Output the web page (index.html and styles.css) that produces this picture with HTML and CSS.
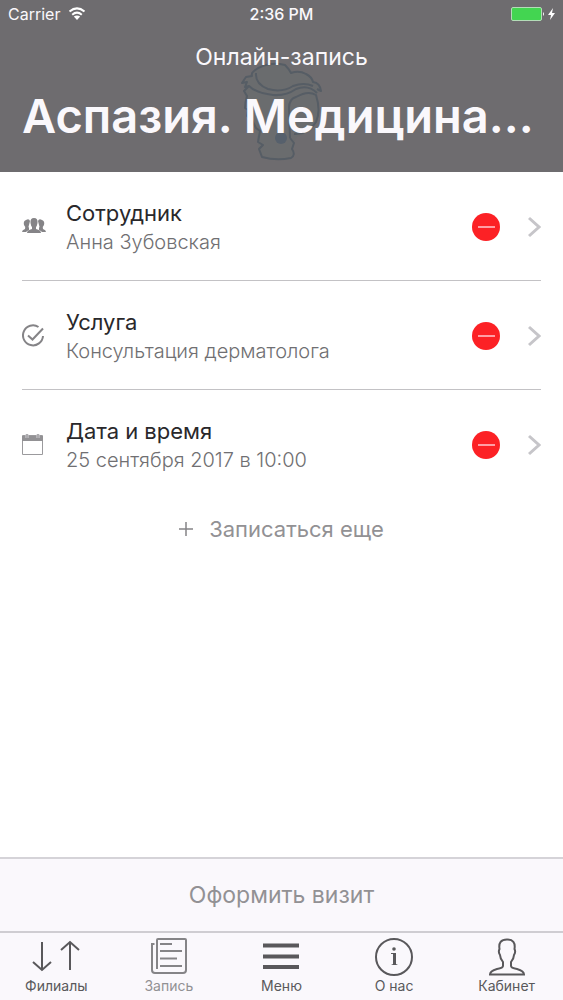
FILE: index.html
```html
<!DOCTYPE html>
<html lang="ru">
<head>
<meta charset="utf-8">
<meta name="viewport" content="width=device-width, initial-scale=1">
<title>Онлайн-запись</title>
<link rel="stylesheet" href="styles.css">
</head>
<body>
<div class="app">
  <header class="header">
    <svg class="header-art" viewBox="0 0 84 102" aria-hidden="true">
      <path class="art-fill" d="M12 12Q24-1 46 3L54 11Q68 9 73 20L81 27L77 32Q83 55 71 69L57 75L52 84L54 94Q40 100 22 95L18 82L16 66L7 54L6 38L3 22Z"/>
      <path d="M14 9Q27-1 45 3Q49 7 51 11Q59 8 66 12Q72 15 73 20Q80 21 81 29L77 27M77 31Q68 22 56 27Q46 34 33 33Q16 31 9 24M73 24Q64 20 53 24Q42 31 28 27Q15 22 16 11M14 9Q11 11 12 14L6 15L2 21L7 20L5 25L9 24L4 29L7 34Q5 41 5 46L8 48L7 54L12 58L16 66L20 69L18 80L23 83L19 87L22 95Q36 99 51 96Q56 93 52 87L54 81L50 76"/>
      <path d="M49 46Q49 37 56 35Q68 28 76 33Q81 49 76 60Q68 73 54 72M49 46L50 76"/>
      <circle class="art-dot" cx="41" cy="76" r="6"/>
    </svg>
    <div class="status">
      <span class="carrier">Carrier
        <svg width="18" height="14" viewBox="0 0 18 14" aria-hidden="true"><path d="M1.500 4.600Q9-1.800 16.500 4.600M4.200 7.700Q9 3.600 13.800 7.700" fill="none" stroke="#fff" stroke-width="2"/><path d="M5.800 9.600Q9 7.200 12.200 9.600L9 13Z" fill="#fff"/></svg>
      </span>
      <span class="time">2:36 PM</span>
      <span class="battery">
        <svg width="46" height="14" viewBox="0 0 46 14" role="img" aria-label="Заряжается"><rect x="2.500" y=".5" width="30" height="13" rx="1.500" fill="#43d551" stroke="#b4dcb8"/><path d="M34 5Q36 7 34 9Z" fill="#fff"/><path d="M44 1L39 8h3l-1 5 5-7h-3Z" fill="#fff"/></svg>
      </span>
    </div>
    <p class="subtitle">Онлайн-запись</p>
    <h1 class="title">Аспазия. Медицина...</h1>
  </header>

  <main class="content">
    <ul class="list">
      <li class="row">
        <svg class="row-icon" viewBox="0 0 24 24" aria-hidden="true"><g fill="#858487"><path d="M4 5Q7 3 8 6L7 10Q6 12 7 13L7 15Q5 16 4 17H0Q0 15 3 14Q4 12 2 10Q1 6 4 5ZM20 5Q17 3 16 6L17 10Q18 12 17 13L17 15Q19 16 20 17H24Q24 15 21 14Q20 12 22 10Q23 6 20 5Z"/><path d="M12 3Q16 3 15.500 8Q15 11 14 12V14Q19 15 19 18H5Q5 15 10 14V12Q9 11 8.500 8Q8 3 12 3Z"/></g></svg>
        <div class="row-text"><h2>Сотрудник</h2><p>Анна Зубовская</p></div>
        <button class="remove" type="button" aria-label="Удалить сотрудника"><span></span></button>
        <button class="open" type="button" aria-label="Выбрать сотрудника"><svg width="13" height="22" viewBox="0 0 13 22"><path d="M1 2L11 11L1 20"/></svg></button>
      </li>
      <li class="row">
        <svg class="row-icon" viewBox="0 0 24 24" aria-hidden="true"><path d="M16.500 3A10 10 0 1 0 21 12M6 11.500L10.500 15.500L21 4.500" fill="none" stroke="#858487" stroke-width="2"/></svg>
        <div class="row-text"><h2>Услуга</h2><p>Консультация дерматолога</p></div>
        <button class="remove" type="button" aria-label="Удалить услугу"><span></span></button>
        <button class="open" type="button" aria-label="Выбрать услугу"><svg width="13" height="22" viewBox="0 0 13 22"><path d="M1 2L11 11L1 20"/></svg></button>
      </li>
      <li class="row">
        <svg class="row-icon" viewBox="0 0 24 24" aria-hidden="true"><path d="M.5 2.500h20v19H.5Z" fill="#fff" stroke="#9b9a9d"/><path d="M0 3h21v5H0Z" fill="#929194"/><path d="M5 1v4M16 1v4" stroke="#d5d4d7" stroke-width="3"/><path d="M5 1v4M16 1v4" stroke="#858487"/></svg>
        <div class="row-text"><h2>Дата и время</h2><p>25 сентября 2017 в 10:00</p></div>
        <button class="remove" type="button" aria-label="Удалить дату и время"><span></span></button>
        <button class="open" type="button" aria-label="Выбрать дату и время"><svg width="13" height="22" viewBox="0 0 13 22"><path d="M1 2L11 11L1 20"/></svg></button>
      </li>
    </ul>
    <button class="add" type="button"><svg width="14" height="14" viewBox="0 0 14 14" aria-hidden="true"><path d="M7 0v14M0 7h14" stroke="#858487" stroke-width="1.500"/></svg>Записаться еще</button>
  </main>

  <button class="submit" type="button">Оформить визит</button>

  <nav class="tabs">
    <a class="tab" href="#branches"><svg width="48" height="38" viewBox="0 0 48 38" aria-hidden="true"><path d="M10 4v28M1 24l9 8 9-8M38 32V4M29 12l9-8 9 8"/></svg>Филиалы</a>
    <a class="tab current" href="#booking" aria-current="page"><svg width="36" height="38" viewBox="0 0 36 38" aria-hidden="true"><path d="M6 31V2Q6 1 7 1H34Q35 1 35 2V32Q35 35 32 35H4Q1 35 1 32V6H3.500"/><path d="M9 6h12M9 13h22M9 20.500h17M9 28h22"/></svg>Запись</a>
    <a class="tab" href="#menu"><svg width="36" height="38" viewBox="0 0 36 38" aria-hidden="true"><path class="bars" d="M0 7.500h36M0 18.500h36M0 29h36"/></svg>Меню</a>
    <a class="tab" href="#about"><svg width="38" height="38" viewBox="0 0 38 38" aria-hidden="true"><circle cx="19" cy="19" r="18"/><circle class="solid" cx="19" cy="11" r="1.800"/><path class="solid" d="M16 15h5v11l2 1H16l2-1V16h-2Z"/></svg>О нас</a>
    <a class="tab" href="#account"><svg width="38" height="38" viewBox="0 0 38 38" aria-hidden="true"><path class="person" d="M2 36.500Q2 33 9 31Q15 30 15 28V24Q12 20 12 17Q10 14 11.500 11Q10 1.500 19 1.500Q28 1.500 26.500 11Q28 14 26 17Q26 20 23 24V28Q23 30 29 31Q36 33 36 36.500Z"/></svg>Кабинет</a>
  </nav>
</div>
</body>
</html>
```
FILE: styles.css
```css
* { box-sizing: border-box; }

body {
  margin: 0;
  background: #fff;
  font-family: Inter, "Noto Sans", sans-serif;
  color: #29282b;
}

h1, h2, p, ul { margin: 0; padding: 0; font-weight: 400; }

button { border: 0; padding: 0; background: none; font: inherit; cursor: pointer; }

.app { display: flex; flex-direction: column; min-height: 100vh; }

.header {
  position: relative;
  padding: 4px 8px 28px;
  background: #6e6c6f;
  color: #faf8fc;
}

.header-art {
  position: absolute;
  top: 62px;
  left: 50%;
  width: 84px;
  height: 102px;
  margin-left: -42px;
  fill: none;
  stroke: #565d65;
  stroke-width: 2;
  stroke-linejoin: round;
}

.header-art .art-fill { fill: #6a6c6e; stroke: none; }
.header-art .art-dot { fill: #56606c; stroke: none; }

.status {
  position: relative;
  display: grid;
  grid-template-columns: 1fr auto 1fr;
  align-items: center;
  font-size: 16px;
  line-height: 20px;
}

.carrier { display: flex; align-items: center; gap: 8px; }
.time { font-weight: 500; }
.battery { display: flex; justify-content: flex-end; }

.subtitle {
  position: relative;
  margin-top: 18px;
  font-size: 23px;
  line-height: 30px;
  text-align: center;
}

.title {
  position: relative;
  margin-top: 16px;
  padding: 0 14px;
  font-size: 47px;
  font-weight: 600;
  line-height: 56px;
  white-space: nowrap;
}

.content { flex: 1; padding: 0 22px; }

.list { list-style: none; }

.row {
  display: flex;
  align-items: center;
  padding: 26px 0 24px;
}

.row + .row { border-top: 1px solid #c3c2c5; }

.row-icon { width: 24px; height: 24px; margin-right: 20px; }

.row-text { flex: 1; }
.row-text h2 { font-size: 22px; line-height: 30px; }
.row-text p { font-size: 20px; font-weight: 300; line-height: 28px; color: #706f72; }

.remove {
  display: flex;
  align-items: center;
  justify-content: center;
  width: 28px;
  height: 28px;
  border-radius: 50%;
  background: #fc2125;
}

.remove span { width: 17px; height: 2px; background: #ff9ea4; }

.open { display: flex; margin-left: 28px; }
.open svg { fill: none; stroke: #c6c5c9; stroke-width: 3; }

.add {
  display: flex;
  align-items: center;
  justify-content: center;
  gap: 16px;
  width: 100%;
  margin-top: 15px;
  font-size: 22px;
  line-height: 32px;
  color: #929194;
}

.submit {
  width: 100%;
  padding: 21px 0;
  border-top: 2px solid #d5d3d8;
  background: #faf8fc;
  font-size: 23px;
  line-height: 30px;
  color: #929194;
}

.tabs {
  display: grid;
  grid-template-columns: repeat(5, 1fr);
  border-top: 2px solid #cfcdd2;
  background: #faf8fc;
}

.tab {
  display: flex;
  flex-direction: column;
  align-items: center;
  gap: 2px;
  padding: 5px 0 6px;
  font-size: 14px;
  line-height: 16px;
  color: #59585b;
  text-decoration: none;
}

.tab svg { fill: none; stroke: #59585b; stroke-width: 2; }
.tab .bars { stroke-width: 4; }
.tab .person { stroke-width: 2; }
.tab .solid { fill: #59585b; stroke: none; }

.tab.current { color: #929194; }
.tab.current svg { stroke: #858487; }
```
